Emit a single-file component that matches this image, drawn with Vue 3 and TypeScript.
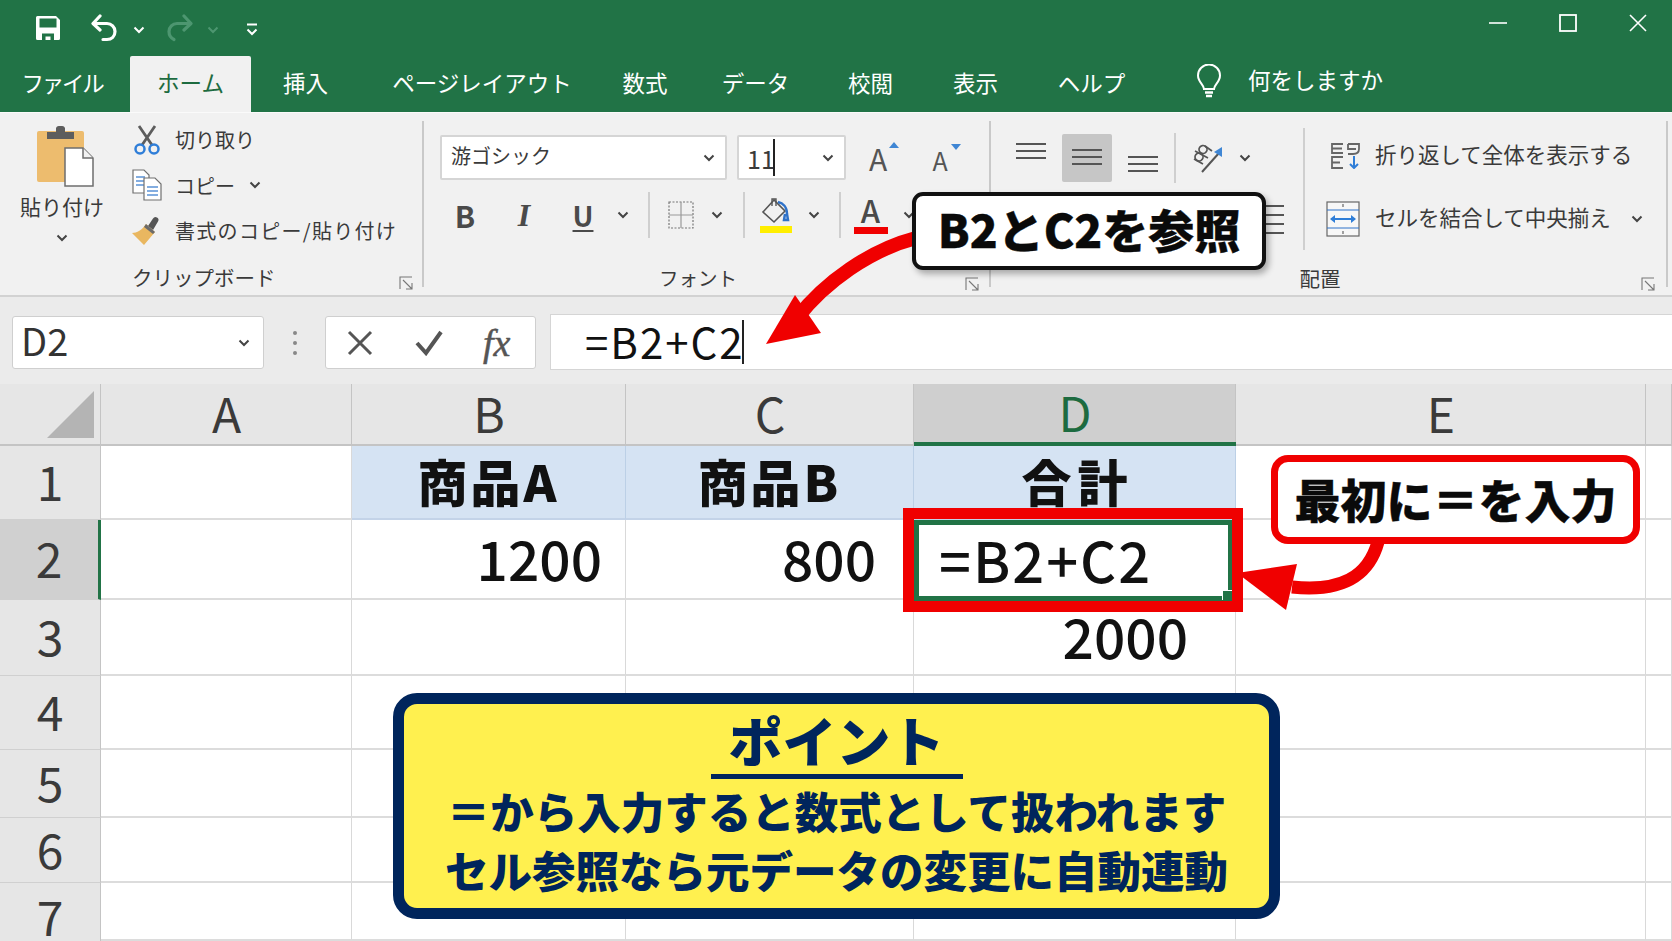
<script setup lang="ts">
import { computed } from 'vue'

interface Tab {
  label: string
  width: number
  active?: boolean
}

interface Cell {
  text: string
  kind: '' | 'head' | 'head wide' | 'num' | 'edit'
  pad?: number
}

const tabs: Tab[] = [
  { label: 'ファイル', width: 130 },
  { label: 'ホーム', width: 121, active: true },
  { label: '挿入', width: 109 },
  { label: 'ページレイアウト', width: 244 },
  { label: '数式', width: 82 },
  { label: 'データ', width: 139 },
  { label: '校閲', width: 91 },
  { label: '表示', width: 119 },
  { label: 'ヘルプ', width: 113 },
]

const columns = [
  { name: 'A', width: 251 },
  { name: 'B', width: 274 },
  { name: 'C', width: 288 },
  { name: 'D', width: 322, active: true },
  { name: 'E', width: 410 },
  { name: '', width: 26 },
]

const blank: Cell = { text: '', kind: '' }
const emptyRow = [blank, blank, blank, blank, blank, blank]

const rows: { n: number; height: number; cells: Cell[] }[] = [
  {
    n: 1,
    height: 74,
    cells: [
      blank,
      { text: '商品A', kind: 'head' },
      { text: '商品B', kind: 'head' },
      { text: '合計', kind: 'head wide' },
      blank,
      blank,
    ],
  },
  {
    n: 2,
    height: 80,
    cells: [
      blank,
      { text: '1200', kind: 'num', pad: 23 },
      { text: '800', kind: 'num', pad: 37 },
      { text: '=B2+C2', kind: 'edit' },
      blank,
      blank,
    ],
  },
  { n: 3, height: 76, cells: [blank, blank, blank, { text: '2000', kind: 'num', pad: 47 }, blank, blank] },
  { n: 4, height: 74, cells: emptyRow },
  { n: 5, height: 68, cells: emptyRow },
  { n: 6, height: 65, cells: emptyRow },
  { n: 7, height: 58, cells: emptyRow },
]

const gridStyle = computed(() => ({
  gridTemplateColumns: `101px ${columns.map((c) => c.width + 'px').join(' ')}`,
  gridTemplateRows: `76px ${rows.map((r) => r.height + 'px').join(' ')}`,
}))
</script>

<template>
  <div class="app">
    <header class="titlebar">
      <div class="qat">
        <svg class="qat-save" width="26" height="26" viewBox="0 0 26 26">
          <path d="M1 2.500A1.500 1.500 0 0 1 2.500 1H21l4 4v18.500a1.500 1.500 0 0 1-1.500 1.500H2.500A1.500 1.500 0 0 1 1 23.500z" fill="#fff" />
          <rect x="4.500" y="3.500" width="17" height="9" fill="#217346" />
          <path d="M7 25v-6.500h12V25h-3.500v-3.500h-5V25z" fill="#217346" />
        </svg>
        <svg class="qat-undo" width="28" height="28" viewBox="0 0 28 28" fill="none" stroke="#fff" stroke-width="3.200" stroke-linecap="round" stroke-linejoin="round">
          <path d="M10 2 3 9.500l7 6.500" />
          <path d="M3.500 9.500H17a8 8 0 0 1 8 8c0 5-3.500 8-8 8h-4" />
        </svg>
        <svg class="qat-chev" width="12" height="8" viewBox="0 0 12 8" fill="none" stroke="#fff" stroke-width="2"><path d="m1.500 1.500 4.500 4.500 4.500-4.500" /></svg>
        <svg class="qat-redo" width="28" height="28" viewBox="0 0 28 28" fill="none" stroke="#4d9670" stroke-width="3.200" stroke-linecap="round" stroke-linejoin="round">
          <path d="M18 2l7 7.500-7 6.500" />
          <path d="M24.500 9.500H11a8 8 0 0 0-8 8c0 5 3 7 5 8" />
        </svg>
        <svg class="qat-chev dim" width="12" height="8" viewBox="0 0 12 8" fill="none" stroke="#4d9670" stroke-width="2"><path d="m1.500 1.500 4.500 4.500 4.500-4.500" /></svg>
        <svg class="qat-more" width="12" height="14" viewBox="0 0 12 14" fill="none" stroke="#fff" stroke-width="2"><path d="M1 1.500h10M1.500 6.500 6 11l4.500-4.500" /></svg>
      </div>
      <div class="winctl">
        <svg width="20" height="20" viewBox="0 0 20 20" stroke="#fff" stroke-width="1.600" fill="none"><path d="M1 10h18" /></svg>
        <svg width="20" height="20" viewBox="0 0 20 20" stroke="#fff" stroke-width="1.800" fill="none"><rect x="2" y="2" width="16" height="16" /></svg>
        <svg width="20" height="20" viewBox="0 0 20 20" stroke="#fff" stroke-width="1.600" fill="none"><path d="m2 2 16 16M18 2 2 18" /></svg>
      </div>
    </header>

    <nav class="tabs">
      <div
        v-for="tab in tabs"
        :key="tab.label"
        class="tab"
        :class="{ active: tab.active }"
        :style="{ width: tab.width + 'px' }"
      >
        {{ tab.label }}
      </div>
      <div class="tell">
        <svg width="26" height="36" viewBox="0 0 26 36" fill="none" stroke="#fff" stroke-width="2">
          <path d="M8 25c0-4-6-7-6-13.500a11 11 0 0 1 22 0C24 18 18 21 18 25z" />
          <path d="M9 28.500h8M10 32h6" stroke-width="2.400" />
        </svg>
        <span>何をしますか</span>
      </div>
    </nav>

    <section class="ribbon">
      <div class="group clip">
        <div class="clip-body">
          <div class="paste">
            <svg width="60" height="62" viewBox="0 0 60 62">
              <rect x="1" y="6" width="47" height="51" rx="2" fill="#edbc6e" />
              <path d="M11 14V7h9V3a3 3 0 0 1 3-2h3a3 3 0 0 1 3 2v4h9v7z" fill="#5d5d5d" />
              <path d="M29 23h18l10 10v28H29z" fill="#fff" stroke="#6e6e6e" stroke-width="1.500" />
              <path d="M47 23v10h10" fill="#f1f1f1" stroke="#6e6e6e" stroke-width="1.500" />
            </svg>
            <span class="paste-label">貼り付け</span>
            <svg class="chev" width="12" height="8" viewBox="0 0 12 8"><path d="m1.500 1.500 4.500 4.500 4.500-4.500" /></svg>
          </div>
          <div class="clip-list">
            <div class="clip-item">
              <svg width="28" height="30" viewBox="0 0 28 30" fill="none">
                <path d="M6 1l13 19M22 1 9 20" stroke="#5d5d5d" stroke-width="2.800" />
                <circle cx="7" cy="24" r="4.500" stroke="#2f7ed8" stroke-width="2.500" />
                <circle cx="21" cy="24" r="4.500" stroke="#2f7ed8" stroke-width="2.500" />
              </svg>
              <span>切り取り</span>
            </div>
            <div class="clip-item">
              <svg width="30" height="32" viewBox="0 0 30 32" fill="#fff" stroke="#707070" stroke-width="1.200">
                <path d="M1 1h11l5 5v18H1z" />
                <path d="M4 8h9M4 12h9M4 16h9" stroke="#5b93d6" stroke-width="1.500" />
                <path d="M12 9h11l6 6v16H12z" />
                <path d="M15 18h11M15 22h11M15 26h11" stroke="#5b93d6" stroke-width="1.500" />
              </svg>
              <span>コピー</span>
              <svg class="chev" width="12" height="8" viewBox="0 0 12 8"><path d="m1.500 1.500 4.500 4.500 4.500-4.500" /></svg>
            </div>
            <div class="clip-item">
              <svg width="30" height="30" viewBox="0 0 30 30">
                <path d="M16 10 21 2.500a2.500 2.500 0 0 1 5 3L21 14z" fill="#555" />
                <path d="M14 8 23 16 12 29 0 17c5 0 10-3 14-9z" fill="#e9b760" />
                <path d="M14 8 23 16 21 18 12 11z" fill="#6b6b6b" />
              </svg>
              <span class="painter">書式のコピー/貼り付け</span>
            </div>
          </div>
        </div>
        <div class="group-label clip-label">
          <span>クリップボード</span>
          <svg class="launcher" width="15" height="15" viewBox="0 0 15 15" fill="none" stroke="#777" stroke-width="1.100"><path d="M1 13V1h12M4 4l9 9M13 7v6H7" /></svg>
        </div>
      </div>

      <div class="group font">
        <div class="font-row1">
          <div class="select font-name"><span>游ゴシック</span><svg class="chev" width="12" height="8" viewBox="0 0 12 8"><path d="m1.500 1.500 4.500 4.500 4.500-4.500" /></svg></div>
          <div class="select font-size"><span>11</span><i class="caret"></i><svg class="chev" width="12" height="8" viewBox="0 0 12 8"><path d="m1.500 1.500 4.500 4.500 4.500-4.500" /></svg></div>
          <div class="sizer grow">A<svg width="10" height="6" viewBox="0 0 10 6"><path d="M5 0l5 6H0z" fill="#3f86d4" /></svg></div>
          <div class="sizer shrink">A<svg width="10" height="6" viewBox="0 0 10 6"><path d="M0 0h10L5 6z" fill="#3f86d4" /></svg></div>
        </div>
        <div class="font-row2">
          <span class="tool bold">B</span>
          <span class="tool italic">I</span>
          <span class="tool under">U</span>
          <span class="slot-chev w20"><svg class="chev" width="12" height="8" viewBox="0 0 12 8"><path d="m1.500 1.500 4.500 4.500 4.500-4.500" /></svg></span>
          <i class="vsep sep-a"></i>
          <span class="tool w48">
            <svg width="26" height="28" viewBox="0 0 26 28" fill="none" stroke="#777" stroke-width="1.200" stroke-dasharray="2 1.500"><rect x="1" y="1" width="24" height="26" /><path d="M13 1v26M1 14h24" stroke-dasharray="none" stroke="#999" /></svg>
          </span>
          <span class="slot-chev w24"><svg class="chev" width="12" height="8" viewBox="0 0 12 8"><path d="m1.500 1.500 4.500 4.500 4.500-4.500" /></svg></span>
          <i class="vsep sep-b"></i>
          <span class="tool w48">
            <svg width="34" height="36" viewBox="0 0 34 36" fill="none">
              <path d="M15 3 4 15l11 10 11-11z" stroke="#555" stroke-width="1.600" />
              <path d="M13 9V2h4v7" stroke="#555" stroke-width="1.400" />
              <path d="M19 5c5 1 9 5 9 12l1 6h-4l1-6" stroke="#2f72c9" stroke-width="2.500" />
              <rect x="1" y="29" width="32" height="7" fill="#ffee00" />
            </svg>
          </span>
          <span class="slot-chev w28"><svg class="chev" width="12" height="8" viewBox="0 0 12 8"><path d="m1.500 1.500 4.500 4.500 4.500-4.500" /></svg></span>
          <i class="vsep sep-c"></i>
          <span class="tool w48 color-a">A<b></b></span>
          <span class="slot-chev w28"><svg class="chev" width="12" height="8" viewBox="0 0 12 8"><path d="m1.500 1.500 4.500 4.500 4.500-4.500" /></svg></span>
        </div>
        <div class="group-label font-label">
          <span>フォント</span>
          <svg class="launcher" width="15" height="15" viewBox="0 0 15 15" fill="none" stroke="#777" stroke-width="1.100"><path d="M1 13V1h12M4 4l9 9M13 7v6H7" /></svg>
        </div>
      </div>

      <div class="group align">
        <div class="align-body">
          <div class="align-left">
            <div class="align-row1">
              <span class="al-btn top"><i></i><i></i><i></i></span>
              <span class="al-btn mid on"><i></i><i></i><i></i></span>
              <span class="al-btn bot"><i></i><i></i><i></i></span>
              <i class="vsep sep-d"></i>
              <svg class="orient" width="32" height="30" viewBox="0 0 32 30" fill="none" stroke="#555" stroke-width="1.700">
                <circle cx="11" cy="6.500" r="4" transform="rotate(35 11 6.500)" />
                <circle cx="7" cy="14" r="4" transform="rotate(35 7 14)" />
                <path d="M3 8l13 7M13 3l7 5M2 16l9 5" />
                <path d="M10 29 27 10" stroke-width="2" />
                <path d="M30 4l0 10-8-5z" fill="#3f86d4" stroke="none" />
              </svg>
              <svg class="chev orient-chev" width="12" height="8" viewBox="0 0 12 8"><path d="m1.500 1.500 4.500 4.500 4.500-4.500" /></svg>
            </div>
            <div class="align-row2"><span class="peek"><i></i><i></i><i></i><i></i></span></div>
          </div>
          <i class="vsep sep-e"></i>
          <div class="align-right">
            <div class="wide-item wrap">
              <svg width="30" height="26" viewBox="0 0 30 26" fill="none" stroke="#666" stroke-width="1.800">
                <path d="M12 1H1v9h11M1 5.500h10M17 1h11v5c0 4-3 5-6 5h-5M17 1v5h8" />
                <path d="M12 14H1v11h11M1 19.500h8" />
                <path d="M23 13v12M19 21l4 4 4-4" stroke="#2f7ed8" stroke-width="2" />
              </svg>
              <span>折り返して全体を表示する</span>
            </div>
            <div class="wide-item merge">
              <svg width="34" height="36" viewBox="0 0 34 36" fill="#fff" stroke="#666" stroke-width="1.200">
                <rect x="1" y="1" width="32" height="34" fill="#f7f7f7" />
                <path d="M1 9h32M1 27h32" stroke="#2f72c9" stroke-width="1" />
                <path d="M17 3v3M17 30v3" />
                <path d="M5 18h24" stroke="#2f7ed8" stroke-width="2" fill="none" />
                <path d="M9 14l-5 4 5 4zM25 14l5 4-5 4z" fill="#2f7ed8" stroke="none" />
              </svg>
              <span>セルを結合して中央揃え</span>
              <svg class="chev merge-chev" width="12" height="8" viewBox="0 0 12 8"><path d="m1.500 1.500 4.500 4.500 4.500-4.500" /></svg>
            </div>
          </div>
        </div>
        <div class="group-label align-label">
          <span>配置</span>
          <svg class="launcher" width="15" height="15" viewBox="0 0 15 15" fill="none" stroke="#777" stroke-width="1.100"><path d="M1 13V1h12M4 4l9 9M13 7v6H7" /></svg>
        </div>
      </div>
    </section>

    <section class="formula-bar">
      <div class="name-box">
        <span>D2</span>
        <svg class="chev" width="12" height="8" viewBox="0 0 12 8"><path d="m1.500 1.500 4.500 4.500 4.500-4.500" /></svg>
      </div>
      <div class="grip"><i></i><i></i><i></i></div>
      <div class="fx-box">
        <svg width="26" height="26" viewBox="0 0 26 26" fill="none" stroke="#555" stroke-width="3"><path d="m2 2 22 22M24 2 2 24" /></svg>
        <svg width="28" height="26" viewBox="0 0 28 26" fill="none" stroke="#555" stroke-width="4"><path d="m2 13 9 10L26 2" /></svg>
        <span class="fx">fx</span>
      </div>
      <div class="formula-input"><span>=B2+C2</span><i class="caret tall"></i></div>
    </section>

    <section class="sheet" :style="gridStyle">
      <div class="corner">
        <svg width="48" height="48" viewBox="0 0 48 48"><path d="M47 0v47H0z" fill="#b4b4b4" /></svg>
      </div>
      <div
        v-for="col in columns"
        :key="col.name"
        class="col-head"
        :class="{ active: col.active }"
      >
        {{ col.name }}
      </div>
      <template v-for="row in rows" :key="row.n">
        <div class="row-head" :class="{ active: row.n === 2, tail: row.n === 7 }">{{ row.n }}</div>
        <div
          v-for="(cell, i) in row.cells"
          :key="i"
          class="cell"
          :class="cell.kind"
          :style="cell.pad ? { paddingRight: cell.pad + 'px' } : undefined"
        >
          {{ cell.text }}
          <template v-if="cell.kind === 'edit'"><i class="handle"></i></template>
        </div>
      </template>
    </section>

    <!-- annotations on top of the sheet -->
    <div class="red-frame"></div>
    <svg class="arrows" width="1672" height="941" viewBox="0 0 1672 941" fill="none">
      <path d="M916 238C870 250 825 282 797 318" stroke="#f00000" stroke-width="14" />
      <path d="M766 344 795 295 821 333z" fill="#f00000" />
      <path d="M1378 542C1368 578 1340 592 1292 587" stroke="#f00000" stroke-width="13" />
      <path d="M1237 573 1297 564 1286 610z" fill="#f00000" />
    </svg>
    <div class="callout black">B2とC2を参照</div>
    <div class="callout red">最初に＝を入力</div>
    <div class="point">
      <div class="point-title">ポイント</div>
      <div class="point-line">＝から入力すると数式として扱われます</div>
      <div class="point-line">セル参照なら元データの変更に自動連動</div>
    </div>
  </div>
</template>

<style scoped>
.app {
  position: relative;
  width: 1672px;
  height: 941px;
  overflow: hidden;
  background: #fff;
  color: #333;
  font-family: "Noto Sans CJK JP", "Noto Sans", sans-serif;
}

.titlebar {
  display: flex;
  justify-content: space-between;
  height: 56px;
  background: #217346;
}

.qat {
  display: flex;
  align-items: center;
  padding-left: 35px;
  height: 56px;
}

.qat-undo {
  margin-left: 29px;
}

.qat-chev {
  margin-left: 15px;
  margin-top: 4px;
}

.qat-redo {
  margin-left: 21px;
}

.qat-chev.dim {
  margin-left: 13px;
}

.qat-more {
  margin-left: 27px;
  margin-top: 4px;
}

.winctl {
  display: flex;
  gap: 50px;
  padding: 13px 24px 0 0;
  height: 20px;
}

.tabs {
  display: flex;
  height: 56px;
  background: #217346;
  color: #fff;
  font-size: 22.500px;
}

.tab {
  display: flex;
  align-items: center;
  justify-content: center;
  padding-bottom: 5px;
  box-sizing: border-box;
  white-space: nowrap;
}

.tab:first-child {
  padding-right: 6px;
  letter-spacing: -2.200px;
}

.tab.active {
  background: #f1f1f1;
  color: #1d6b40;
  border-radius: 2px 2px 0 0;
}

.tell {
  display: flex;
  align-items: center;
  margin-left: 48px;
  margin-top: -4px;
  gap: 28px;
}

.tell span {
  margin: -6px 0 0 -2px;
}

.ribbon {
  display: flex;
  height: 185px;
  box-sizing: border-box;
  background: #f1f1f1;
  border-bottom: 2px solid #d2d2d2;
  border-top: 1px solid #fafafa;
  font-size: 20px;
  color: #3a3a3a;
}

.group {
  position: relative;
  box-sizing: border-box;
  border-right: 1px solid transparent;
}

.group::after {
  content: "";
  position: absolute;
  right: -1px;
  top: 8px;
  bottom: 8px;
  width: 2px;
  background: #c9c9c9;
}

.group-label {
  position: absolute;
  left: 0;
  right: 0;
  top: 150px;
  display: flex;
  justify-content: center;
  font-size: 20.500px;
  line-height: 28px;
}

.launcher {
  position: absolute;
  right: 10px;
  top: 13px;
}

.chev {
  fill: none;
  stroke: #444;
  stroke-width: 2;
}

.clip {
  width: 424px;
}

.clip-body {
  display: flex;
}

.paste {
  display: flex;
  flex-direction: column;
  align-items: center;
  width: 124px;
  padding-top: 12px;
}

.paste svg:first-child {
  margin-left: 8px;
}

.paste-label {
  margin-top: 4px;
  font-size: 21px;
  line-height: 30px;
}

.paste .chev {
  margin-top: 13px;
}

.clip-list {
  display: flex;
  flex-direction: column;
  padding-top: 4px;
}

.clip-item {
  display: flex;
  align-items: center;
  height: 45.500px;
  white-space: nowrap;
}

.clip-item svg:first-child {
  width: 30px;
  margin: 0 13px 0 8px;
}

.clip-item .chev {
  margin-left: 14px;
}

.painter {
  letter-spacing: 1.300px;
}

.clip-label {
  left: 92px;
  right: auto;
  box-sizing: border-box;
  width: 200px;
  justify-content: flex-start;
  padding-left: 40px;
}

.clip-label .launcher {
  right: auto;
  left: 307px;
}

.font {
  width: 567px;
  padding-left: 16px;
}

.font-row1 {
  display: flex;
  align-items: center;
  margin-top: 22px;
  height: 45px;
}

.select {
  position: relative;
  display: flex;
  align-items: center;
  box-sizing: border-box;
  height: 45px;
  background: #fff;
  border: 2px solid #d5d5d5;
  border-radius: 2px;
  padding: 0 0 4px 9px;
}

.select .chev {
  position: absolute;
  right: 10px;
  top: 17px;
}

.font-name {
  width: 287px;
}

.font-size {
  width: 109px;
  margin-left: 10px;
  padding: 0 0 0 8px;
  font-size: 25px;
}

.caret {
  display: inline-block;
  width: 2px;
  height: 37px;
  margin-left: -2px;
  background: #222;
}

.sizer {
  position: relative;
  display: flex;
  justify-content: center;
  color: #555;
}

.sizer svg {
  position: absolute;
  top: 4px;
  right: -5px;
}

.grow {
  width: 32px;
  margin-left: 16px;
  font-size: 30px;
  line-height: 40px;
}

.shrink {
  width: 32px;
  margin-left: 30px;
  font-size: 25px;
  line-height: 40px;
  margin-top: 4px;
}

.font-row2 {
  display: flex;
  align-items: center;
  margin-top: 7px;
  margin-left: -4.500px;
  height: 56px;
}

.tool {
  display: flex;
  align-items: center;
  justify-content: center;
  width: 59px;
  height: 56px;
  color: #4a4a4a;
  font-family: "Liberation Serif", serif;
}

.tool.w48 {
  width: 48px;
}

.bold {
  font-family: "Noto Sans CJK JP", sans-serif;
  font-weight: 700;
  font-size: 30px;
}

.italic {
  font-weight: 700;
  font-style: italic;
  font-size: 32px;
}

.under {
  font-family: "Noto Sans CJK JP", sans-serif;
  font-weight: 700;
  font-size: 28px;
  text-decoration: underline;
  text-underline-offset: 3px;
}

.slot-chev {
  display: flex;
  justify-content: center;
}

.w20 {
  width: 20px;
}

.w24 {
  width: 24px;
}

.w28 {
  width: 28px;
}

.vsep {
  display: block;
  width: 2px;
  background: #cfcfcf;
  flex: none;
}

.sep-a,
.sep-b,
.sep-c {
  height: 46px;
}

.sep-a {
  margin: 0 7px 0 15px;
}

.sep-b {
  margin: 0 7px 0 14px;
}

.sep-c {
  margin: 0 6px 0 11px;
}

.color-a {
  position: relative;
  font-family: "Noto Sans CJK JP", sans-serif;
  font-size: 31px;
  font-weight: 500;
  padding-bottom: 12px;
  box-sizing: border-box;
}

.color-a b {
  position: absolute;
  left: 7px;
  right: 7px;
  bottom: 9px;
  height: 7px;
  background: #f00000;
}

.font-label {
  padding-right: 18px;
  box-sizing: border-box;
  top: 151px;
  font-size: 19.500px;
}

.align {
  flex: 1;
}

.align::after {
  right: 3px;
}

.align-body {
  display: flex;
  height: 150px;
}

.align-left {
  width: 312px;
  padding-left: 15px;
  box-sizing: border-box;
}

.align-row1 {
  display: flex;
  align-items: center;
  margin-top: 21px;
  height: 48px;
  gap: 6px;
}

.al-btn {
  display: flex;
  flex-direction: column;
  align-items: center;
  gap: 5px;
  box-sizing: border-box;
  width: 50px;
  height: 48px;
  padding-top: 9px;
  border-radius: 2px;
}

.al-btn i {
  display: block;
  width: 30px;
  height: 2px;
  background: #555;
}

.al-btn.mid {
  padding-top: 15px;
  background: #c6c6c6;
}

.al-btn.bot {
  padding-top: 22px;
}

.sep-d {
  height: 50px;
}

.orient {
  margin-left: 10px;
}

.orient-chev {
  margin-left: 9px;
}

.align-row2 {
  display: flex;
  margin-top: 23px;
}

.peek {
  display: flex;
  flex-direction: column;
  align-items: flex-end;
  gap: 7px;
  margin-left: 258px;
}

.peek i {
  display: block;
  width: 20px;
  height: 2px;
  background: #555;
}

.sep-e {
  height: 122px;
  margin-top: 15px;
}

.align-right {
  flex: 1;
  padding-left: 20px;
  font-size: 21.500px;
}

.wide-item {
  display: flex;
  align-items: center;
  height: 46px;
  white-space: nowrap;
}

.wide-item span {
  margin-top: -6px;
}

.wrap {
  margin-top: 20px;
}

.wrap svg {
  margin: 0 14px 0 6px;
}

.merge {
  margin-top: 17px;
}

.merge > svg:first-child {
  margin: 0 15px 0 1px;
}

.merge-chev {
  margin-left: 20px;
}

.align-label {
  padding-right: 22px;
  box-sizing: border-box;
  top: 151px;
}

.align-label .launcher {
  right: 15px;
}

.formula-bar {
  display: flex;
  align-items: center;
  height: 73px;
  background: #ebebeb;
  box-sizing: border-box;
  padding: 0 0 0 12px;
}

.name-box {
  display: flex;
  align-items: center;
  justify-content: space-between;
  box-sizing: border-box;
  width: 252px;
  height: 53px;
  padding: 0 13px 6px 8px;
  margin-top: 18px;
  background: #fff;
  border: 1px solid #cfcfcf;
  border-radius: 3px;
  font-size: 38px;
  color: #333;
}

.name-box .chev {
  margin-top: 6px;
}

.grip {
  display: flex;
  flex-direction: column;
  align-items: center;
  gap: 6px;
  width: 61px;
  margin-top: 18px;
}

.grip i {
  display: block;
  width: 4px;
  height: 4px;
  border-radius: 50%;
  background: #888;
}

.fx-box {
  display: flex;
  align-items: center;
  box-sizing: border-box;
  width: 211px;
  height: 53px;
  margin-top: 18px;
  padding-left: 21px;
  gap: 42px;
  background: #fff;
  border: 1px solid #cfcfcf;
  border-radius: 3px;
}

.fx {
  font-family: "Liberation Serif", serif;
  font-style: italic;
  font-size: 38px;
  color: #555;
  margin-left: -2px;
  -webkit-text-stroke: 0.500px #555;
}

.formula-input {
  display: flex;
  align-items: center;
  box-sizing: border-box;
  flex: 1;
  height: 56px;
  margin: 17px 0 0 14px;
  padding: 0 0 4px 34px;
  background: #fff;
  border: 1px solid #d5d5d5;
  border-right: none;
  font-size: 42px;
  letter-spacing: 2px;
  color: #111;
}

.caret.tall {
  height: 44px;
  margin-left: -3px;
  margin-top: 4px;
}

.sheet {
  display: grid;
  background: #fff;
}

.corner,
.col-head {
  position: relative;
  background: linear-gradient(#ebebeb 14px, #e6e6e6 14px);
  border-bottom: 2px solid #c4c4c4;
  box-sizing: border-box;
}

.corner {
  display: flex;
  align-items: flex-end;
  justify-content: flex-end;
  padding: 0 6px 5px 0;
}

.corner::after,
.col-head::after {
  content: "";
  position: absolute;
  right: 0;
  top: 14px;
  bottom: 0;
  width: 1px;
  background: #c4c4c4;
}

.col-head {
  display: flex;
  align-items: center;
  justify-content: center;
  padding-top: 9px;
  font-size: 48px;
  color: #3a3a3a;
}

.col-head.active {
  z-index: 1;
  background: linear-gradient(#ebebeb 14px, #cfcfcf 14px);
  border-bottom: 4px solid #217346;
  color: #1d6b40;
}

.row-head {
  display: flex;
  align-items: center;
  justify-content: center;
  box-sizing: border-box;
  padding-bottom: 5px;
  background: #e6e6e6;
  border-right: 1px solid #c4c4c4;
  border-bottom: 1px solid #d0d0d0;
  font-size: 48px;
  line-height: 1;
  color: #3a3a3a;
}

.row-head.active {
  background: #d0d0d0;
  border-right: 3px solid #217346;
}

.row-head.tail {
  padding: 5px 0 0;
  border-bottom: none;
}

.cell {
  position: relative;
  display: flex;
  align-items: center;
  box-sizing: border-box;
  padding-bottom: 4px;
  border-right: 1px solid #d9d9d9;
  border-bottom: 2px solid #dcdcdc;
  color: #111;
}

.cell.head {
  justify-content: center;
  padding-bottom: 4px;
  background: #d5e3f3;
  border-right-color: #bcd0e6;
  border-bottom-color: #c3d3e8;
  font-size: 50px;
  font-weight: 900;
  letter-spacing: 3px;
}

.cell.head.wide {
  padding-left: 6px;
  letter-spacing: 6px;
}

.cell.num {
  justify-content: flex-end;
  font-size: 55px;
  font-weight: 500;
}

.cell.edit {
  padding-left: 20px;
  margin: 0 3px -1px 0;
  font-size: 56px;
  font-weight: 500;
  letter-spacing: 2px;
  border: 5px solid #217346;
  white-space: nowrap;
}

.handle {
  position: absolute;
  right: -5px;
  bottom: -5px;
  width: 10px;
  height: 10px;
  background: #217346;
  box-shadow: -1px -1px 0 #fff;
}

.red-frame {
  position: absolute;
  left: 903px;
  top: 508px;
  box-sizing: border-box;
  width: 340px;
  height: 104px;
  border: 11px solid #f00000;
}

.arrows {
  position: absolute;
  left: 0;
  top: 0;
}

.callout {
  position: absolute;
  display: flex;
  align-items: center;
  justify-content: center;
  box-sizing: border-box;
  background: #fff;
  color: #0a0a0a;
  font-weight: 900;
  white-space: nowrap;
  -webkit-text-stroke: 0.400px #0a0a0a;
}

.callout.black {
  left: 912px;
  top: 192px;
  width: 354px;
  height: 78px;
  padding-bottom: 6px;
  border: 4px solid #111;
  border-radius: 11px;
  box-shadow: 3px 4px 6px rgba(0, 0, 0, 0.3);
  font-size: 46px;
}

.callout.red {
  left: 1271px;
  top: 455px;
  width: 369px;
  height: 89px;
  padding-bottom: 4px;
  border: 7px solid #f00000;
  border-radius: 17px;
  font-size: 46px;
}

.point {
  position: absolute;
  left: 393px;
  top: 693px;
  display: flex;
  flex-direction: column;
  align-items: center;
  box-sizing: border-box;
  width: 887px;
  height: 226px;
  border: 11px solid #00255c;
  border-radius: 24px;
  background: #fff04f;
  color: #00255c;
  font-weight: 900;
}

.point-title {
  margin-top: 2px;
  padding: 0 18px;
  border-bottom: 5px solid #00255c;
  font-size: 54px;
  line-height: 68px;
}

.point-line {
  font-size: 43.500px;
  line-height: 59px;
  white-space: nowrap;
}

.point-line:nth-child(2) {
  margin-top: 2px;
}
</style>

<style>
html,
body {
  margin: 0;
  overflow: hidden;
}
</style>
